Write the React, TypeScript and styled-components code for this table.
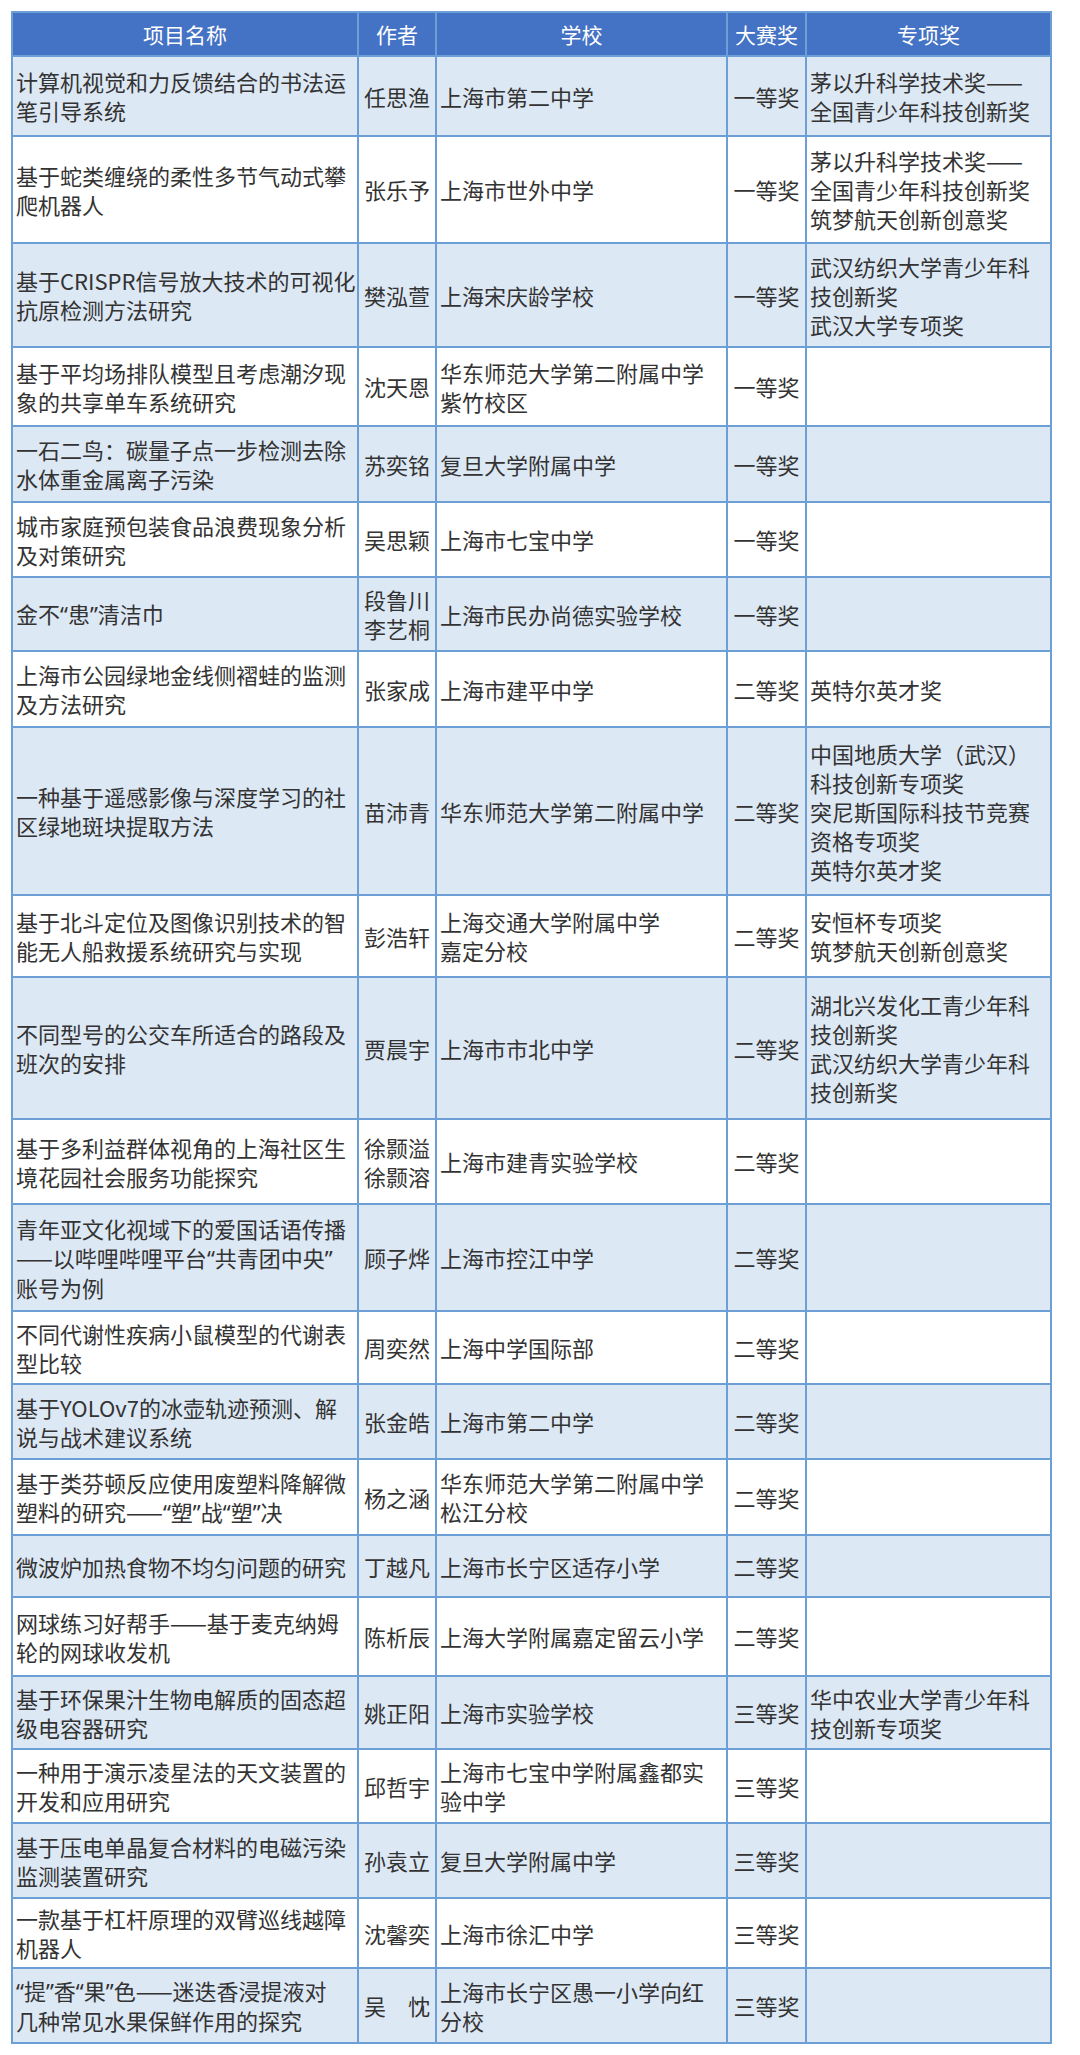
import React from 'react';
import styled, { createGlobalStyle } from 'styled-components';

const GlobalStyle = createGlobalStyle`
  html, body {
    margin: 0;
    padding: 0;
    background: #ffffff;
  }
`;

const Page = styled.div`
  padding: 11px 0 0 11px;
  font-family: "Noto Sans CJK SC", "Noto Sans", sans-serif;
`;

const Table = styled.table`
  border-collapse: collapse;
  table-layout: fixed;
  width: 1041px;
  border: 2px solid #6b9fd6;
`;

const HeadRow = styled.tr`
  height: 44px;
  background: #4472c4;
`;

const HeadCell = styled.th`
  border: 2px solid #6b9fd6;
  color: #ffffff;
  font-size: 21px;
  font-weight: 400;
  line-height: 29px;
  text-align: center;
  padding: 0;
`;

const Row = styled.tr<{ $h: number; $shaded: boolean }>`
  height: ${p => p.$h}px;
  background: ${p => (p.$shaded ? '#dde8f5' : '#ffffff')};
`;

const Cell = styled.td<{ $center?: boolean }>`
  border: 2px solid #6b9fd6;
  color: #333333;
  font-size: 22px;
  line-height: 29px;
  padding: 0 3px;
  vertical-align: middle;
  text-align: ${p => (p.$center ? 'center' : 'left')};
  white-space: pre;
  overflow: hidden;
`;

// the source uses narrow latin quote marks, not the full-width CJK ones
const Quote = styled.span`
  font-family: "Noto Sans", "Liberation Sans", sans-serif;
`;

const withQuotes = (text: string) =>
  text.split(/([“”])/).map((part, i) =>
    part === '“' || part === '”' ? <Quote key={i}>{part}</Quote> : part
  );

type Entry = {
  title: string;
  author: string;
  school: string;
  prize: string;
  special: string;
  h: number;
};

const rows: Entry[] = [
  { title: '计算机视觉和力反馈结合的书法运\n笔引导系统', author: '任思渔', school: '上海市第二中学', prize: '一等奖', special: '茅以升科学技术奖——\n全国青少年科技创新奖', h: 80 },
  { title: '基于蛇类缠绕的柔性多节气动式攀\n爬机器人', author: '张乐予', school: '上海市世外中学', prize: '一等奖', special: '茅以升科学技术奖——\n全国青少年科技创新奖\n筑梦航天创新创意奖', h: 107 },
  { title: '基于CRISPR信号放大技术的可视化\n抗原检测方法研究', author: '樊泓萱', school: '上海宋庆龄学校', prize: '一等奖', special: '武汉纺织大学青少年科\n技创新奖\n武汉大学专项奖', h: 104 },
  { title: '基于平均场排队模型且考虑潮汐现\n象的共享单车系统研究', author: '沈天恩', school: '华东师范大学第二附属中学\n紫竹校区', prize: '一等奖', special: '', h: 79 },
  { title: '一石二鸟：碳量子点一步检测去除\n水体重金属离子污染', author: '苏奕铭', school: '复旦大学附属中学', prize: '一等奖', special: '', h: 76 },
  { title: '城市家庭预包装食品浪费现象分析\n及对策研究', author: '吴思颖', school: '上海市七宝中学', prize: '一等奖', special: '', h: 75 },
  { title: '金不“患”清洁巾', author: '段鲁川\n李艺桐', school: '上海市民办尚德实验学校', prize: '一等奖', special: '', h: 74 },
  { title: '上海市公园绿地金线侧褶蛙的监测\n及方法研究', author: '张家成', school: '上海市建平中学', prize: '二等奖', special: '英特尔英才奖', h: 76 },
  { title: '一种基于遥感影像与深度学习的社\n区绿地斑块提取方法', author: '苗沛青', school: '华东师范大学第二附属中学', prize: '二等奖', special: '中国地质大学（武汉）\n科技创新专项奖\n突尼斯国际科技节竞赛\n资格专项奖\n英特尔英才奖', h: 168 },
  { title: '基于北斗定位及图像识别技术的智\n能无人船救援系统研究与实现', author: '彭浩轩', school: '上海交通大学附属中学\n嘉定分校', prize: '二等奖', special: '安恒杯专项奖\n筑梦航天创新创意奖', h: 82 },
  { title: '不同型号的公交车所适合的路段及\n班次的安排', author: '贾晨宇', school: '上海市市北中学', prize: '二等奖', special: '湖北兴发化工青少年科\n技创新奖\n武汉纺织大学青少年科\n技创新奖', h: 142 },
  { title: '基于多利益群体视角的上海社区生\n境花园社会服务功能探究', author: '徐颢溢\n徐颢溶', school: '上海市建青实验学校', prize: '二等奖', special: '', h: 85 },
  { title: '青年亚文化视域下的爱国话语传播\n——以哔哩哔哩平台“共青团中央”\n账号为例', author: '顾子烨', school: '上海市控江中学', prize: '二等奖', special: '', h: 107 },
  { title: '不同代谢性疾病小鼠模型的代谢表\n型比较', author: '周奕然', school: '上海中学国际部', prize: '二等奖', special: '', h: 73 },
  { title: '基于YOLOv7的冰壶轨迹预测、解\n说与战术建议系统', author: '张金皓', school: '上海市第二中学', prize: '二等奖', special: '', h: 75 },
  { title: '基于类芬顿反应使用废塑料降解微\n塑料的研究——“塑”战“塑”决', author: '杨之涵', school: '华东师范大学第二附属中学\n松江分校', prize: '二等奖', special: '', h: 76 },
  { title: '微波炉加热食物不均匀问题的研究', author: '丁越凡', school: '上海市长宁区适存小学', prize: '二等奖', special: '', h: 62 },
  { title: '网球练习好帮手——基于麦克纳姆\n轮的网球收发机', author: '陈析辰', school: '上海大学附属嘉定留云小学', prize: '二等奖', special: '', h: 79 },
  { title: '基于环保果汁生物电解质的固态超\n级电容器研究', author: '姚正阳', school: '上海市实验学校', prize: '三等奖', special: '华中农业大学青少年科\n技创新专项奖', h: 73 },
  { title: '一种用于演示凌星法的天文装置的\n开发和应用研究', author: '邱哲宇', school: '上海市七宝中学附属鑫都实\n验中学', prize: '三等奖', special: '', h: 74 },
  { title: '基于压电单晶复合材料的电磁污染\n监测装置研究', author: '孙袁立', school: '复旦大学附属中学', prize: '三等奖', special: '', h: 75 },
  { title: '一款基于杠杆原理的双臂巡线越障\n机器人', author: '沈馨奕', school: '上海市徐汇中学', prize: '三等奖', special: '', h: 70 },
  { title: '“提”香“果”色——迷迭香浸提液对\n几种常见水果保鲜作用的探究', author: '吴　忱', school: '上海市长宁区愚一小学向红\n分校', prize: '三等奖', special: '', h: 75 },
];

const App: React.FC = () => (
  <Page>
    <GlobalStyle />
    <Table>
      <colgroup>
        <col style={{ width: 346 }} />
        <col style={{ width: 78 }} />
        <col style={{ width: 291 }} />
        <col style={{ width: 79 }} />
        <col style={{ width: 245 }} />
      </colgroup>
      <thead>
        <HeadRow>
          <HeadCell>项目名称</HeadCell>
          <HeadCell>作者</HeadCell>
          <HeadCell>学校</HeadCell>
          <HeadCell>大赛奖</HeadCell>
          <HeadCell>专项奖</HeadCell>
        </HeadRow>
      </thead>
      <tbody>
        {rows.map((r, i) => (
          <Row key={i} $h={r.h} $shaded={i % 2 === 0}>
            <Cell>{withQuotes(r.title)}</Cell>
            <Cell $center>{r.author}</Cell>
            <Cell>{r.school}</Cell>
            <Cell $center>{r.prize}</Cell>
            <Cell>{r.special}</Cell>
          </Row>
        ))}
      </tbody>
    </Table>
  </Page>
);

export default App;
